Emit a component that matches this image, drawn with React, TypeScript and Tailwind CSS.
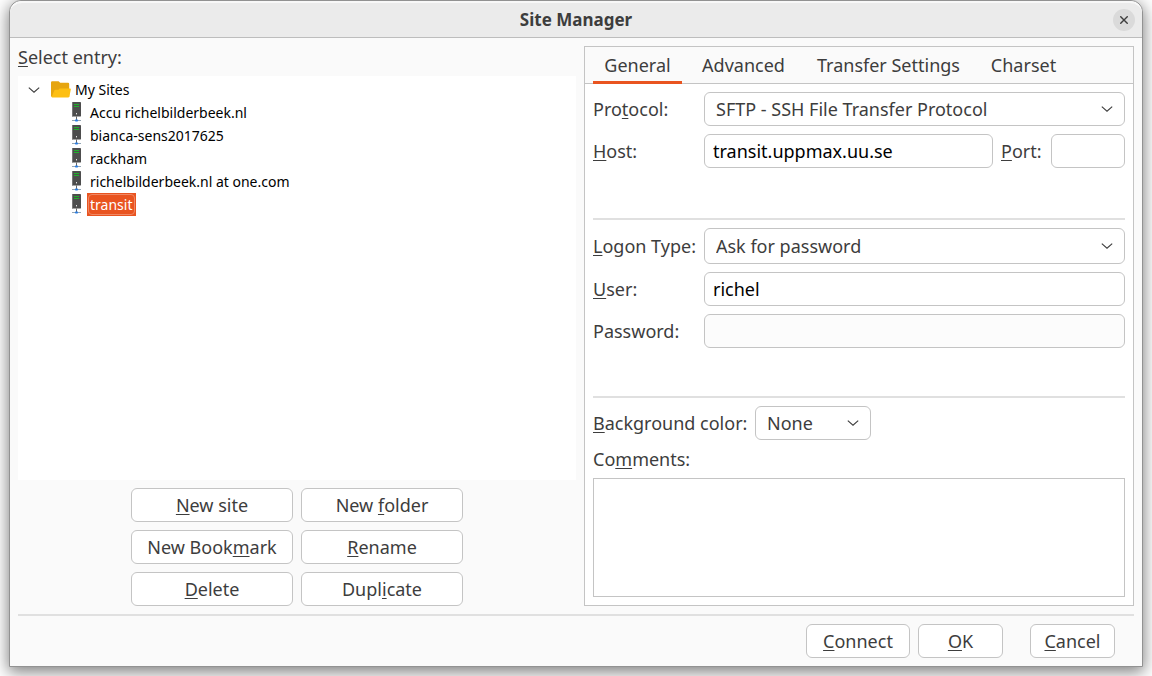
import { useState } from "react";
import type { ReactNode } from "react";

const SITES = [
  "Accu richelbilderbeek.nl",
  "bianca-sens2017625",
  "rackham",
  "richelbilderbeek.nl at one.com",
  "transit",
];

/** Underlines the mnemonic letter that follows an ampersand. */
function Mnemonic({ text }: { text: string }) {
  const at = text.indexOf("&");
  if (at < 0) return <>{text}</>;
  return (
    <span>
      {text.slice(0, at)}
      <span className="underline decoration-1 underline-offset-2 [text-decoration-skip-ink:none]">
        {text[at + 1]}
      </span>
      {text.slice(at + 2)}
    </span>
  );
}

function PushButton({ text, width }: { text: string; width: string }) {
  return (
    <button
      type="button"
      className={`flex h-[34px] items-center justify-center rounded-md border border-[#c4c4c4] bg-white ${width}`}
    >
      <Mnemonic text={text} />
    </button>
  );
}

function Chevron({ className }: { className: string }) {
  return (
    <svg
      viewBox="0 0 12 8"
      className={`h-2 w-3 ${className}`}
      fill="none"
      stroke="#3d3d3d"
      strokeWidth="1.1"
      aria-hidden="true"
    >
      <path d="M0.8 1.6 L6 6.2 L11.2 1.6" />
    </svg>
  );
}

function DropDown({
  id,
  options,
  className,
}: {
  id: string;
  options: string[];
  className: string;
}) {
  return (
    <div className={`relative ${className}`}>
      <select
        id={id}
        className="h-full w-full appearance-none rounded-md border border-[#c4c4c4] bg-white pr-8 pl-[11px]"
      >
        {options.map((o) => (
          <option key={o}>{o}</option>
        ))}
      </select>
      <Chevron className="pointer-events-none absolute top-1/2 right-3 -translate-y-1/2" />
    </div>
  );
}

function Row({ id, label, children }: { id: string; label: string; children: ReactNode }) {
  return (
    <div className="flex items-center">
      <label htmlFor={id} className="w-[111px] shrink-0 whitespace-nowrap">
        <Mnemonic text={label} />
      </label>
      {children}
    </div>
  );
}

function FolderIcon() {
  return (
    <svg viewBox="0 0 20 17" className="h-[17px] w-5 shrink-0" aria-hidden="true">
      <path d="M0 1.4Q0 .2 1.2 .2H7.6L9.2 1.8H17Q18.2 1.8 18.2 3V16H1.2Q0 16 0 14.8Z" fill="#e6a50f" />
      <path d="M4.6 8.8H7.4L8.8 7.4H19Q20 7.4 19.8 8.4L18.4 15.4Q18.2 16.5 17 16.5H1.2Q.5 16.5 .8 15.7L3.2 9.7Q3.6 8.8 4.6 8.8Z" fill="#fdbf12" />
    </svg>
  );
}

function ServerIcon() {
  return (
    <svg viewBox="0 0 12 21" className="h-[21px] w-3 shrink-0" aria-hidden="true">
      <rect x="2" y="0" width="9" height="14.4" rx="0.4" fill="#4d4d4d" />
      <rect x="2" y="0" width="1" height="14.4" fill="#777" />
      <rect x="4" y="2" width="5" height="1" fill="#1fb02b" />
      <rect x="4" y="4" width="5" height="1" fill="#1fb02b" />
      <rect x="6" y="11" width="1" height="1.4" fill="#e4e4e4" />
      <rect x="6" y="14.4" width="1" height="3.6" fill="#666" />
      <rect x="2" y="18" width="9" height="1" fill="#93a5b4" />
      <rect x="5" y="17.4" width="3" height="2" rx="0.7" fill="#2d7fe3" />
    </svg>
  );
}

const FIELD = "h-[34px] min-w-0 rounded-md border border-[#c4c4c4] px-2 text-black";

const TABS = [
  { name: "General", width: "w-[89px]" },
  { name: "Advanced", width: "w-[107px]" },
  { name: "Transfer Settings", width: "w-[167px]" },
  { name: "Charset", width: "w-[87px]" },
];

export default function App() {
  const [selected, setSelected] = useState("transit");
  const [tab, setTab] = useState("General");

  return (
    <div className="flex min-h-screen bg-white px-[9px] pb-[9px] font-['Noto_Sans',sans-serif] text-[18px] leading-[22px] text-[#3d3d3d]">
      <div className="flex grow flex-col rounded-t-xl border border-[#929292] bg-[#fafafa] shadow-[0_4px_16px_1px_rgba(0,0,0,0.5)]">
        <header className="grid h-[37px] grid-cols-[1fr_auto_1fr] items-center rounded-t-xl border-t-2 border-b border-t-[#f8f8f8] border-b-[#bdbdbd] bg-[#ebebeb] px-[7px]">
          <h1 className="col-start-2 text-[17px] font-bold">Site Manager</h1>
          <button
            type="button"
            aria-label="Close"
            className="flex size-[22px] items-center justify-center justify-self-end rounded-full bg-[#dadada]"
          >
            <svg viewBox="0 0 8 8" className="size-2" stroke="#3d3d3d" strokeWidth="1.4" aria-hidden="true">
              <path d="M0.3 0.3 L7.7 7.7 M7.7 0.3 L0.3 7.7" />
            </svg>
          </button>
        </header>

        <main className="mx-2 mt-2 grid grow grid-cols-[558fr_550fr] gap-2">
          <section className="flex min-w-0 flex-col gap-2">
            <h2 id="entries">
              <Mnemonic text="&Select entry:" />
            </h2>
            <ul
              role="tree"
              aria-labelledby="entries"
              className="grow bg-white pt-[2px] pl-2.5 text-[14px] leading-[23px] text-black"
            >
              <li role="treeitem" aria-expanded="true">
                <div className="flex h-[23px] items-center">
                  <Chevron className="mr-[11px]" />
                  <FolderIcon />
                  <span className="ml-1">My Sites</span>
                </div>
                <ul role="group" className="pl-[42px]">
                  {SITES.map((site) => (
                    <li
                      key={site}
                      role="treeitem"
                      aria-selected={site === selected}
                      onClick={() => setSelected(site)}
                      className="flex h-[23px] items-center gap-[5px]"
                    >
                      <ServerIcon />
                      {site === selected ? (
                        <span className="flex h-[23px] items-center bg-[#e95420] p-px text-white">
                          <span className="flex h-[21px] items-center rounded-sm border border-[#f08763] pr-0.5 pl-px">
                            {site}
                          </span>
                        </span>
                      ) : (
                        <span className="pl-[3px]">{site}</span>
                      )}
                    </li>
                  ))}
                </ul>
              </li>
            </ul>
            <div className="grid grid-cols-[162px_162px] justify-center gap-2">
              <PushButton text="&New site" width="w-full" />
              <PushButton text="New &folder" width="w-full" />
              <PushButton text="New Book&mark" width="w-full" />
              <PushButton text="&Rename" width="w-full" />
              <PushButton text="&Delete" width="w-full" />
              <PushButton text="Dupl&icate" width="w-full" />
            </div>
          </section>

          <section className="flex min-w-0 flex-col border border-[#c4c4c4] bg-white">
            <div role="tablist" className="flex h-[37px] gap-2 border-b border-[#c4c4c4] bg-[#fafafa] px-2">
              {TABS.map(({ name, width }) => (
                <button
                  key={name}
                  type="button"
                  role="tab"
                  aria-selected={name === tab}
                  onClick={() => setTab(name)}
                  className={`-mb-px border-b-3 pt-0.5 whitespace-nowrap ${width} ${
                    name === tab ? "border-[#e95420]" : "border-transparent"
                  }`}
                >
                  {name}
                </button>
              ))}
            </div>

            <form className="flex grow flex-col p-2" onSubmit={(e) => e.preventDefault()}>
              <div className="flex flex-col gap-2">
                <Row id="protocol" label="Pro&tocol:">
                  <DropDown id="protocol" className="h-[34px] grow" options={["SFTP - SSH File Transfer Protocol"]} />
                </Row>
                <Row id="host" label="&Host:">
                  <input id="host" type="text" defaultValue="transit.uppmax.uu.se" className={`${FIELD} w-0 grow bg-white`} />
                  <label htmlFor="port" className="ml-2 w-[50px] shrink-0">
                    <Mnemonic text="&Port:" />
                  </label>
                  <input id="port" type="text" className={`${FIELD} w-[74px] bg-white`} />
                </Row>
              </div>
              <hr className="mt-[50px] mb-2 border-t-2 border-[#e0e0e0]" />
              <div className="flex flex-col gap-2">
                <Row id="logon" label="&Logon Type:">
                  <DropDown id="logon" className="h-9 grow" options={["Ask for password"]} />
                </Row>
                <Row id="user" label="&User:">
                  <input id="user" type="text" defaultValue="richel" className={`${FIELD} grow bg-white`} />
                </Row>
                <Row id="password" label="Password:">
                  <input id="password" type="password" disabled className={`${FIELD} grow bg-[#fcfcfc]`} />
                </Row>
              </div>
              <hr className="mt-12 mb-2 border-t-2 border-[#e0e0e0]" />
              <div className="flex items-center">
                <label htmlFor="background" className="w-[162px] shrink-0 whitespace-nowrap">
                  <Mnemonic text="&Background color:" />
                </label>
                <DropDown id="background" className="h-[34px] w-[116px]" options={["None"]} />
              </div>
              <label htmlFor="comments" className="my-2">
                <Mnemonic text="Co&mments:" />
              </label>
              <textarea id="comments" className="min-h-[100px] w-full grow resize-none border border-[#c4c4c4] bg-white p-1 text-black" />
            </form>
          </section>
        </main>

        <hr className="mx-2 mt-2 border-t-2 border-[#e0e0e0]" />
        <footer className="flex justify-end gap-2 py-2 pr-[27px]">
          <PushButton text="&Connect" width="w-[104px]" />
          <PushButton text="&OK" width="mr-[19px] w-[85px]" />
          <PushButton text="&Cancel" width="w-[85px]" />
        </footer>
      </div>
    </div>
  );
}
